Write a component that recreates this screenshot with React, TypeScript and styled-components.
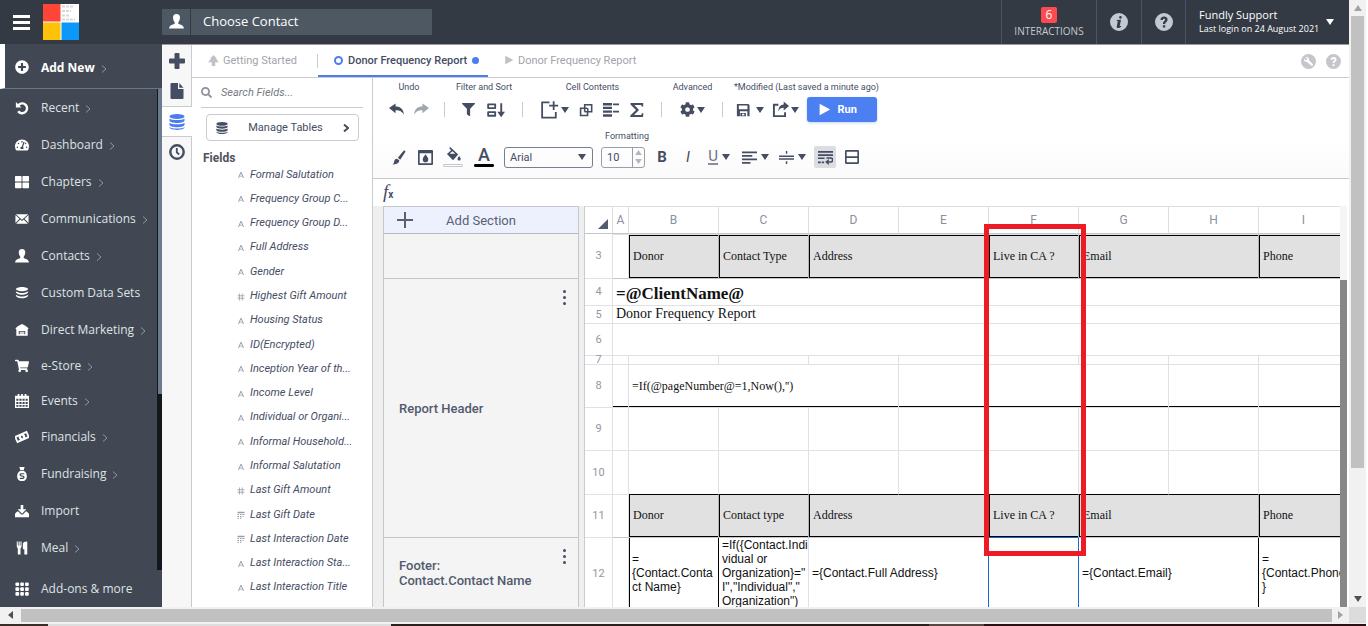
import React from "react";
import styled, { createGlobalStyle, css } from "styled-components";
import {
  FaPlusCircle, FaTachometerAlt, FaThLarge, FaShoppingCart,
  FaFilter, FaCog, FaSearch, FaWrench,
} from "react-icons/fa";

const sans = `"Open Sans", "Noto Sans", sans-serif`;
const ui = `Roboto, "Liberation Sans", sans-serif`;
const serif = `"Liberation Serif", serif`;
const ink = "#454d63";
const line = "#c9cbd0";

const GlobalStyle = createGlobalStyle`
  *, *::before, *::after { box-sizing: border-box; }
  body { margin: 0; background: #fff; overflow: hidden; }
  button, input, select { font: inherit; color: inherit; margin: 0; padding: 0; border: 0; background: none; }
  button { cursor: pointer; }
  svg { display: block; flex: none; }
`;

/* ---------- icons ---------- */
const glyphs: Record<string, React.ReactNode> = {
  undo: <path d="M1 1v6.500h6.500L5.300 5.300A4.200 4.200 0 1 1 4.800 10.800l-2.300 1.700A7 7 0 1 0 3.300 3.300Z" />,
  back: <path d="M0 6.500 7 1.500v3.300c5 0 8.300 2.700 9 8.700-2-3.500-4.500-4.800-9-4.800V12Z" />,
  forward: <path d="M16 6.500 9 1.500v3.300c-5 0-8.300 2.700-9 8.700 2-3.500 4.500-4.800 9-4.800V12Z" />,
  plus: <path d="M5.500 1a1 1 0 0 1 1-1h3a1 1 0 0 1 1 1v4.500H15a1 1 0 0 1 1 1v3a1 1 0 0 1-1 1h-4.500V15a1 1 0 0 1-1 1h-3a1 1 0 0 1-1-1v-4.500H1a1 1 0 0 1-1-1v-3a1 1 0 0 1 1-1h4.500Z" />,
  file: <path d="M2.500 0H9v6h5.500v9a1 1 0 0 1-1 1h-11a1 1 0 0 1-1-1V1a1 1 0 0 1 1-1ZM10.300 0l4.200 4.800h-4.200Z" />,
  data: <><ellipse cx="8" cy="2.500" rx="7.500" ry="2.500" /><path d="M.5 4.500c2 2 13 2 15 0v2.200c-1 3-14 3-15 0ZM.5 8.700c2 2 13 2 15 0v2.200c-1 3-14 3-15 0ZM.5 12.900c2 2 13 2 15 0v.7c-1 3.200-14 3.200-15 0Z" /></>,
  clock: <><circle cx="8" cy="8" r="6.700" fill="none" stroke="currentColor" strokeWidth="2.400" /><path d="M7.800 4v4.300l2.400 2.200" fill="none" stroke="currentColor" strokeWidth="1.800" /></>,
  brush: <path d="M14.500.5c1 .3 1 1.200.6 2L9.800 10.300 7.300 8.300 13 1.300Q13.800.4 14.500.5ZM6.500 9.200l2.500 2C8.500 14 6 15.500 1.500 15.500c1.800-1 1.500-2 2-3.800.5-1.600 1.600-2.500 3-2.500Z" />,
  mail: <><path d="M1 2.500h14l-7 6.300Z" /><path d="M.5 3.500v9l4.600-4.800ZM15.500 3.500v9l-4.600-4.800Z" /><path d="m1.300 13.500 4.700-5 2 1.800 2-1.800 4.700 5Z" /></>,
  person: <path d="M8 0c2.400 0 3.900 1.600 3.700 4.200-.1 2-1 3.600-1.700 4.600-.4.900 0 1.800 1 2.200 2.500.9 4.500 1.400 5 4.500H0c.5-3.100 2.500-3.600 5-4.500 1-.4 1.400-1.300 1-2.200-.7-1-1.600-2.600-1.700-4.600C4.100 1.600 5.600 0 8 0Z" />,
  layers: <><path d="M8 1c4 0 7 1.500 7 2.500S12 6 8 6 1 4.500 1 3.500 4 1 8 1Z" /><path d="M1 6c1.500 1.500 4.500 2 7 2s5.500-.5 7-2c.5 2.500-3 4-7 4S.5 8.500 1 6Z" /><path d="M1 10c1.500 1.500 4.500 2 7 2s5.500-.5 7-2c.5 2.500-3 4-7 4s-7.500-1.500-7-4Z" /></>,
  depot: <path fillRule="evenodd" d="M8 1c3 1.500 6 3 7.500 5.200L14.500 7.500V14.500H1.500V7.500L.5 6.200C2 4 5 2.500 8 1ZM4.300 9v3.800h1v-1h5.400v1h1V9Zm1 1h5.400v1H5.300Z" />,
  calendar: <path fillRule="evenodd" d="M3 0h2v2h2V0h2v2h2V0h2v2h3v14H0V2h3ZM1.500 5.500v2.300h2.400V5.500Zm3.500 0v2.300h2.500V5.500Zm3.600 0v2.300H11V5.500Zm3.500 0v2.300h2.400V5.500ZM1.500 9v2.300h2.400V9ZM5 9v2.300h2.500V9Zm3.600 0v2.300H11V9Zm3.500 0v2.300h2.400V9ZM1.500 12.500v2.100h2.400v-2.100Zm3.500 0v2.100h2.500v-2.100Zm3.600 0v2.100H11v-2.100Zm3.500 0v2.100h2.400v-2.100Z" />,
  cash: <g transform="rotate(-24 8 8)"><path fillRule="evenodd" d="M0 3.800h16v8.400H0Zm2 2.200v4h2.800a3.500 3.500 0 0 1 0-4Zm12 0h-2.800a3.500 3.500 0 0 1 0 4H14ZM8 6.500a1 1.500 0 1 0 0 3 1 1.500 0 1 0 0-3Z" /></g>,
  bag: <><path d="M5 0h6L10 3.500H6Z" /><path fillRule="evenodd" d="M6 4.300h4c2 1.200 3.500 3.200 3.500 6A5 5 0 0 1 8 16a5 5 0 0 1-5.500-5.700c0-2.800 1.500-4.800 3.500-6Zm4.600 4V7.100H6.700C5 7.100 4.500 9.800 6.300 10.500l2.800.7c.6.300.4 1.100-.2 1.100H5.500v1.300h3.600c2.200 0 2.500-3 .5-3.700l-2.500-.6c-.5-.2-.4-1 .1-1Z" /></>,
  tray: <><path d="M6.500 1h3v5H13L8 11 3 6h3.500Z" /><path d="M2.500 8.500h1.300L7 12h2l3.200-3.500h1.300L16 11v4H0v-4Z" /></>,
  cutlery: <><path d="M2 .5h1.200V5h.9V.5h1.300V5h.9V.5h1.200V6c0 1-.5 1.800-1.200 2.300V15.500H3.200V8.300C2.500 7.800 2 7 2 6Z" /><path d="M9 3c.5-1.500 1.800-2.500 5-2.500v15h-3.300V9.500H9Z" /></>,
  dots: <>{[2.500, 8, 13.500].map((y) => [2.500, 8, 13.500].map((x) => <rect key={`${x}-${y}`} x={x - 2} y={y - 2} width="4.200" height="4.200" rx="1.200" />))}</>,
  tree: <path d="M8 0 13 5l-1.500.5L16 10.500h-5.500V16h-5v-5.500H0l4.500-5L3 5Z" />,
  play: <path d="M2 1 15 8 2 15Z" />,
  letter: <path fillRule="evenodd" d="M7 2h2l5 12h-2l-1.200-3H5.200L4 14H2Zm1 2.300L5.800 9.500h4.400Z" />,
  hash: <path d="M5 1v14M10.500 1v14M1 5.500h14M1 10.500h14" fill="none" stroke="currentColor" strokeWidth="1.600" />,
  table: <path d="M1 1.500h14v3H1ZM1 6h3v2H1Zm5 0h3v2H6Zm5 0h4v2h-4ZM1 10h3v2H1Zm5 0h3v2H6ZM11 10h2v2h-2ZM1 13.500h3v2H1Zm5 0h3v2H6Z" />,
  sort: <><path d="M1 3h6.300v3.300H1ZM1 9.800h6.300v3.300H1Z" fill="none" stroke="currentColor" strokeWidth="1.600" strokeLinejoin="round" /><path d="M11.800 2h1.700v7.500H16L12.600 14.500 9.200 9.500h2.600Z" /></>,
  insert: <><path d="M8 2H1.800v12.800h11.500V10" fill="none" stroke="currentColor" strokeWidth="1.500" /><path d="M11.500 1v7.500M7.700 4.700h7.600" fill="none" stroke="currentColor" strokeWidth="1.500" /></>,
  merge: <path d="M6.500 10V2h8v8h-4.500V6M9.500 6H1.800v8.200h8V10H6.500" fill="none" stroke="currentColor" strokeWidth="1.800" />,
  outline: <><path d="M0 1h9v2.500H0ZM0 4.800h9V7H0ZM0 8.400h9v2.300H0ZM0 12.200h9v2.500H0Z" /><path d="M10 1.500h6v1.700h-6ZM10 8.700h6v1.700h-6Z" /></>,
  sigma: <path d="M1.500 1h12.700v3.500h-1.600l-.3-1.600H5.400L10 8l-5 5.100h7.400l.4-1.800h1.600L14 15H1.300v-1.400L7 8 1.500 2.400Z" />,
  save: <path fillRule="evenodd" d="M1 1h13.200L15.500 2.500V15H1Zm2.200 1.800v4.400h9.900V2.800ZM4.500 9.500V15H3.200 5v-3.600h6.300V15h1.700V9.500ZM7 12.300h2.500v1.900H7Z" />,
  share: <><path d="M6 3.500H1.800v10.700h10.500V10.500" fill="none" stroke="currentColor" strokeWidth="1.800" /><path d="M11 .5 16 4.700 11 9V6.300C8.500 6.300 7 7.300 6 9.800c0-4 1.800-6.200 5-6.500Z" /></>,
  drop: <path fillRule="evenodd" d="M1 0h14a1 1 0 0 1 1 1v14a1 1 0 0 1-1 1H1a1 1 0 0 1-1-1V1a1 1 0 0 1 1-1Zm.8 3.500v10.700h12.400V3.500ZM8 4.500c2 2.800 3 4.200 3 5.500a3 3 0 0 1-6 0c0-1.300 1-2.700 3-5.500Z" />,
  bucket: <><path fillRule="evenodd" d="M4.500 0 13 8l-5.500 6L1 7.500 5.500 3.400 3.500 1.200ZM6.700 4.600 3.800 7.300h6.200Z" /><path d="M14 9.500c1.200 1.700 1.700 2.400 1.700 3.300a1.700 1.700 0 0 1-3.400 0c0-.9.500-1.600 1.700-3.300Z" /></>,
  align: <path d="M0 1.500h16v1.900H0ZM0 5.200h11v1.900H0ZM0 9h16v1.900H0ZM0 12.700h9v1.900H0Z" />,
  middle: <path d="M7.300 1h1.500v3H7.300ZM7.300 12h1.500v3H7.300ZM0 5.800h16v1.700H0ZM0 8.700h16v1.700H0Z" />,
  wrap: <><path d="M0 1h16v2H0ZM0 4.500h16v2H0ZM0 8h7v1.600H0ZM0 12.300h3v1.800H0ZM4 12.300h2.500v1.800H4Z" /><path d="M9 8.500h4.500a1.600 1.600 0 0 1 0 4.300H11" fill="none" stroke="currentColor" strokeWidth="1.700" /><path d="M11.500 9.500V16l-4-3.200Z" /></>,
  split: <path fillRule="evenodd" d="M0 1.500A1.500 1.500 0 0 1 1.500 0h13A1.500 1.500 0 0 1 16 1.500v13a1.500 1.500 0 0 1-1.500 1.500h-13A1.500 1.500 0 0 1 0 14.500ZM1.900 1.900V7h12.200V1.900Zm0 7.100v5.100h12.200V9Z" />,
  info: <path fillRule="evenodd" d="M8 0a8 8 0 1 1 0 16A8 8 0 0 1 8 0Zm1.300 2.600a1.200 1.200 0 1 0 0 2.400 1.200 1.200 0 0 0 0-2.400ZM6 6.200v1h1L6 12c-.2 1.500 1.600 2 4 .2l-.3-.8c-.8.5-1.200.4-1-.3L9.800 6Z" />,
  help: <path fillRule="evenodd" d="M8 0a8 8 0 1 1 0 16A8 8 0 0 1 8 0ZM4.800 6.200h2.100c.1-1.600 2.200-1.500 2.100-.2-.1 1.100-2 1.400-2 3.700h2c0-1.500 2.200-1.900 2.200-3.900 0-3.500-6.300-3.600-6.400.4ZM7 10.800v2.100h2.100v-2.100Z" />,
};

const Glyph = ({ name, size = 14 }: { name: string; size?: number }) => (
  <svg width={size} height={size} viewBox="0 0 16 16" fill="currentColor" aria-hidden="true">{glyphs[name]}</svg>
);
const Caret = ({ up }: { up?: boolean }) => (
  <svg width="8" height="6" viewBox="0 0 8 6" fill="currentColor" aria-hidden="true"><path d={up ? "M4 0 8 6H0Z" : "M0 0h8L4 6Z"} /></svg>
);
const Chevron = ({ bold }: { bold?: boolean }) => (
  <svg width="6" height="8" viewBox="0 0 6 8" fill="none" stroke="currentColor" strokeWidth={bold ? 2 : 1} aria-hidden="true"><path d="m1 .5 4 3.500-4 3.500" /></svg>
);

/* ---------- page frame ---------- */
const Frame = styled.div`
  display: grid;
  grid-template-columns: minmax(0, 1fr) 17px;
  grid-template-rows: minmax(0, 1fr) 16px 3px;
  height: 100vh;
  padding-right: 2px;
  font-family: ${ui};
  font-size: 11px;
  color: ${ink};
`;
const Page = styled.div`display: flex; flex-direction: column; min-width: 0; overflow: hidden;`;
const VScroll = styled.div`
  display: grid;
  grid-template-rows: 16px 452fr 122fr 17px;
  justify-items: center;
  background: #f1f1f1;
  color: #505050;
  > svg { align-self: center; }
  > svg:first-child { color: #a3a3a3; }
`;
const HScroll = styled.div`
  display: grid;
  grid-template-columns: 21px minmax(0, 1fr) 17px;
  align-items: center;
  justify-items: center;
  background: #f1f1f1;
`;
const Thumb = styled.div<{ $across?: boolean }>`
  background: #c1c1c1;
  ${(p) => (p.$across ? "height: 13px; width: 100%;" : "width: 13px;")}
`;
const Corner = styled.div`background: #dcdcdc;`;
const Strip = styled.div`
  grid-column: 1 / -1;
  border-top: 1px solid #f1f1f1;
  background: linear-gradient(90deg, #3a2d27 0 3.500%, #dedede 3.500% 28.600%, #2d211d 28.600% 68%, #594743 68% 72%, #2c1013 72%);
`;

/* ---------- header ---------- */
const Header = styled.header`
  display: flex;
  flex: none;
  height: 44px;
  background: #343a44;
  color: #fff;
  font-family: ${sans};
`;
const Brand = styled.div`display: flex; align-items: center; gap: 13px; width: 162px; padding-left: 13px;`;
const MenuButton = styled.button`
  display: grid;
  gap: 3px;
  width: 17px;
  span { height: 3px; background: #fff; }
`;
const ContactSearch = styled.label`
  display: flex;
  align-self: center;
  width: 270px;
  height: 26px;
  background: #4d5863;
  > span { display: grid; place-items: center; width: 29px; padding-bottom: 2px; border-right: 1px solid #343a44; }
`;
const ContactInput = styled.input`
  flex: 1;
  min-width: 0;
  padding: 0 0 2px 12px;
  font-size: 13px;
  outline: 0;
  &::placeholder { color: #fff; opacity: 1; }
`;
const HeaderRight = styled.div`display: flex; margin-left: auto;`;
const HeaderCell = styled.button<{ $w: number }>`
  display: flex;
  flex-direction: column;
  align-items: center;
  justify-content: center;
  width: ${(p) => p.$w}px;
  border-left: 1px solid #4c5562;
  font-size: 10px;
  line-height: 14px;
  color: #c3c9d1;
`;
const Badge = styled.span`
  width: 16px;
  margin-bottom: 1px;
  border-radius: 2px;
  background: #fc4a4e;
  color: #fff;
  font-size: 12px;
  line-height: 16px;
`;
const Account = styled(HeaderCell)`
  flex-direction: row;
  justify-content: flex-start;
  gap: 7px;
  padding-left: 13px;
  color: #fff;
  text-align: left;
  strong { display: block; font-size: 11px; font-weight: 400; }
  span { font-size: 9px; white-space: nowrap; }
`;

/* ---------- main navigation ---------- */
const Body = styled.div`display: flex; flex: 1; min-height: 0;`;
const Sidebar = styled.nav`
  display: flex;
  flex-direction: column;
  flex: none;
  width: 162px;
  background: #414853;
  font-family: ${sans};
  font-size: 12px;
`;
const NavLink = styled.a<{ $kind?: "add" | "short" }>`
  display: flex;
  flex: none;
  align-items: center;
  gap: 12px;
  height: ${(p) => (p.$kind === "add" ? 45 : p.$kind === "short" ? 35 : 37)}px;
  padding-left: 15px;
  color: #dfe2e6;
  white-space: nowrap;
  text-decoration: none;
  > svg { color: #fff; }
  > span { display: flex; align-items: center; gap: 6px; }
  > span > svg { color: #9197a0; margin-top: 3px; }
  ${(p) => p.$kind === "add" && css`
    padding: 2px 0 0 10px;
    border-left: 5px solid #fff;
    border-bottom: 1px solid #66768c;
    color: #fff;
    font-weight: 700;
  `}
`;
const NavScroll = styled.div`display: flex; flex: 1; min-height: 0; overflow: hidden;`;
const NavList = styled.div`flex: 1; min-width: 0;`;
const NavBar = styled.div`
  display: grid;
  grid-template-rows: 305fr 176fr;
  width: 5px;
  border-left: 1px solid #14171c;
  background: #14171c;
  div { background: #6c7a8e; }
`;

/* ---------- report writer ---------- */
const Writer = styled.main`display: flex; flex: 1; min-width: 0; border-top: 1px solid #9a9a9a;`;
const Rail = styled.div`width: 30px; flex: none; padding-top: 1px; background: #f7f7f7; border-right: 1px solid ${line};`;
const RailButton = styled.button<{ $on?: boolean }>`
  display: grid;
  place-items: center;
  width: 29px;
  height: 30px;
  ${(p) => p.$on && css`
    width: 30px;
    height: 31px;
    border-top: 1px solid ${line};
    border-bottom: 1px solid ${line};
    background: #fff;
    color: #4c7df0;
  `}
`;
const Workspace = styled.div`display: flex; flex-direction: column; flex: 1; min-width: 0;`;
const Tabs = styled.div`display: flex; flex: none; height: 33px; padding-right: 8px; border-bottom: 1px solid ${line};`;
const Tab = styled.button<{ $w: number; $on?: boolean }>`
  display: flex;
  align-items: center;
  gap: ${(p) => (p.$on ? 5 : 4)}px;
  width: ${(p) => p.$w}px;
  height: 32px;
  padding-left: 16px;
  border-bottom: 2px solid ${(p) => (p.$on ? "#4c7df0" : "transparent")};
  color: ${(p) => (p.$on ? ink : "#a2a4ab")};
  font-weight: ${(p) => (p.$on ? 500 : 400)};
  white-space: nowrap;
  > svg { color: #c0c2c7; }
`;
const TabRule = styled.span`width: 1px; height: 14px; margin: 9px 0; background: ${line};`;
const Ring = styled.i`width: 9px; height: 9px; border: 2px solid #4c7df0; border-radius: 50%;`;
const Dot = styled.i`width: 7px; height: 7px; border-radius: 50%; background: #4c7df0;`;
const TabTools = styled.div`display: flex; align-items: center; gap: 10px; margin-left: auto; color: #c4c6cc;`;
const RoundButton = styled.button`
  display: grid;
  place-items: center;
  width: 15px;
  height: 15px;
  border-radius: 50%;
  background: #c4c6cc;
  color: #fff;
  svg { transform: scaleX(-1); }
`;
const PlainButton = styled.button`color: inherit;`;
const Columns = styled.div`display: flex; flex: 1; min-height: 0;`;

/* ---------- fields panel ---------- */
const Fields = styled.aside`
  display: flex;
  flex-direction: column;
  flex: none;
  width: 181px;
  padding-bottom: 8px;
  border-right: 1px solid ${line};
`;
const FieldSearch = styled.label`
  display: flex;
  align-items: center;
  gap: 9px;
  height: 30px;
  margin: 0 9px;
  border-bottom: 1px solid ${line};
  color: #8d919b;
  input { width: 120px; font-style: italic; outline: 0; }
  input::placeholder { color: #777a82; opacity: 1; }
`;
const ManageButton = styled.button`
  display: flex;
  align-items: center;
  justify-content: space-between;
  height: 27px;
  margin: 6px 13px 0 14px;
  padding: 0 9px;
  border: 1px solid ${line};
  border-radius: 4px;
`;
const FieldsTitle = styled.h2`
  margin: 9px 0 0 11px;
  font-size: 12px;
  font-weight: 700;
  line-height: 16px;
  color: #50535c;
`;
const FieldList = styled.ul`
  display: flex;
  flex: 1;
  flex-direction: column;
  min-height: 0;
  margin: -4px 0 0;
  padding: 0 20px 0 45px;
  list-style: none;
  font-style: italic;
`;
const FieldItem = styled.li`
  display: flex;
  flex: 1;
  align-items: center;
  gap: 5px;
  white-space: nowrap;
  > svg { color: #9a9ea8; margin-top: 2px; }
`;

/* ---------- toolbar ---------- */
const Editor = styled.section`display: flex; flex-direction: column; flex: 1; min-width: 0;`;
const Toolbar = styled.div`
  flex: none;
  height: 101px;
  border-bottom: 1px solid ${line};
  background: linear-gradient(#fff 60%, #fafafa);
`;
const Groups = styled.div`display: flex; height: 51px;`;
const Group = styled.div<{ $w: number }>`
  display: flex;
  flex-direction: column;
  align-items: center;
  gap: 8px;
  width: ${(p) => p.$w}px;
  padding-top: 2px;
`;
const GroupLabel = styled.div`font-size: 9px; line-height: 14px; white-space: nowrap;`;
const GroupTools = styled.div<{ $gap: number; $last?: boolean }>`
  display: flex;
  align-items: center;
  justify-content: center;
  gap: ${(p) => p.$gap}px;
  width: 100%;
  height: 15px;
  border-right: 1px solid ${(p) => (p.$last ? "transparent" : line)};
`;
const ToolButton = styled.button<{ $gap?: number; $dim?: boolean }>`
  display: flex;
  align-items: center;
  gap: ${(p) => p.$gap ?? 2}px;
  ${(p) => p.$dim && "opacity: .5;"}
`;
const RunButton = styled.button`
  display: flex;
  align-items: center;
  gap: 7px;
  width: 70px;
  height: 25px;
  padding: 0 0 1px 11px;
  border-radius: 3px;
  background: #4c7ff2;
  color: #fff;
  font-weight: 700;
  box-shadow: 0 1px 3px #c7d3f0;
`;
const Format = styled.div`display: inline-flex; flex-direction: column; align-items: center; padding-left: 11px;`;
const FormatRow = styled.div`display: flex; align-items: center; height: 28px; padding-right: 7px;`;
const FormatButton = styled.button<{ $w: number; $on?: boolean }>`
  display: flex;
  align-items: center;
  justify-content: center;
  gap: 4px;
  width: ${(p) => p.$w}px;
  height: 22px;
  border-radius: 2px;
  ${(p) => p.$on && "background: #dcdde1; margin: 0 5px 0 3px;"}
`;
const Swatch = styled.span<{ $ink: string; $edge: string }>`
  display: flex;
  flex-direction: column;
  align-items: center;
  justify-content: space-between;
  width: 20px;
  height: 20px;
  font-size: 18px;
  font-weight: 500;
  line-height: 16px;
  &::after { content: ""; width: 100%; height: 3px; border: 1px solid ${(p) => p.$edge}; border-radius: 1px; background: ${(p) => p.$ink}; }
`;
const Mark = styled.span<{ $kind: "b" | "i" | "u" }>`
  font-size: 15px;
  line-height: 17px;
  ${(p) => p.$kind === "b" && "font-weight: 700;"}
  ${(p) => p.$kind === "i" && "font-style: italic;"}
  ${(p) => p.$kind === "u" && "border-bottom: 2px solid #8a8f9c; color: #6d7484; line-height: 14px;"}
`;
const FontPicker = styled.label`
  display: grid;
  grid-template-columns: 1fr 14px;
  align-items: center;
  width: 89px;
  height: 21px;
  margin: 0 8px 0 4px;
  border: 1px solid #777e90;
  border-radius: 3px;
  select { grid-area: 1 / 1 / 2 / 3; height: 19px; padding-left: 5px; appearance: none; outline: 0; }
  svg { grid-area: 1 / 2; }
`;
const SizePicker = styled.div`
  display: flex;
  width: 44px;
  height: 21px;
  margin-right: 4px;
  border: 1px solid #9a9fac;
  border-radius: 3px;
  input { width: 30px; padding-left: 5px; outline: 0; }
`;
const Spinner = styled.div`
  display: grid;
  flex: 1;
  place-items: center;
  border-left: 1px solid #9a9fac;
  color: #b3b6bf;
  svg { width: 7px; height: 5px; }
`;
const FormulaBar = styled.label`
  display: flex;
  flex: none;
  align-items: center;
  height: 27px;
  padding: 0 0 2px 10px;
  font: italic 400 19px/20px ${serif};
  sub { font: 700 10px/12px ${ui}; align-self: center; padding-top: 6px; }
  input { flex: 1; outline: 0; }
`;

/* ---------- sections and sheet ---------- */
const Canvas = styled.div`display: flex; flex: 1; min-height: 0; margin-right: 2px; padding-left: 10px; background: #efefef; overflow: hidden;`;
const Sections = styled.div`
  display: flex;
  flex-direction: column;
  flex: none;
  width: 196px;
  margin-right: 5px;
  border: 1px solid #c3c6cd;
  border-bottom: 0;
  background: #f4f4f4;
`;
const AddSection = styled.button`
  display: grid;
  grid-template-columns: 42px 1fr;
  align-items: center;
  justify-items: center;
  flex: none;
  height: 27px;
  padding-right: 42px;
  border-bottom: 1px solid #b4b8c2;
  background: #edf1fd;
  font-size: 13px;
  color: #596074;
`;
const Section = styled.div<{ $h: number }>`
  display: flex;
  flex: none;
  align-items: center;
  justify-content: space-between;
  height: ${(p) => p.$h}px;
  padding-left: 15px;
  border-bottom: 1px solid #c3c6cd;
  font-size: 13px;
  font-weight: 500;
  line-height: 15px;
  color: #535a6e;
`;
const More = styled.button`
  display: grid;
  align-self: flex-start;
  gap: 3px;
  padding: 11px 12px 0;
  i { width: 3px; height: 3px; border-radius: 50%; background: ${ink}; }
`;
const Sheet = styled.div`position: relative; display: flex; flex: 1; min-width: 0; background: #fff;`;
const SheetClip = styled.div`flex: 1; min-width: 0; overflow: hidden; border-left: 1px solid ${line};`;
const Table = styled.table`
  table-layout: fixed;
  width: 764px;
  border-collapse: separate;
  border-spacing: 0;
  font-size: 12px;
`;
const Head = styled.th`
  height: 28px;
  padding: 0;
  border: solid #dcdee2;
  border-width: 1px 1px 1px 0;
  border-bottom-color: #c3c6cd;
  font-size: 12px;
  font-weight: 400;
  color: #8b909c;
  svg { margin: 7px 0 0 13px; }
`;
const RowHead = styled.th`
  padding: 0;
  border: solid #e0e1e5;
  border-width: 0 1px 1px 0;
  font-size: 11px;
  font-weight: 400;
  line-height: 8px;
  color: #9297a3;
`;
type CellStyle = { $face?: "title" | "report" | "label" | "arial"; $shadow?: string; $right?: string; $bottom?: string; $top?: string; $grey?: boolean };
const Cell = styled.td<CellStyle>`
  padding: ${(p) => (p.$grey ? "0 0 2px 4px" : p.$face ? "0 0 1px 3px" : "0")};
  border-right: 1px solid ${(p) => p.$right ?? "#e0e1e5"};
  border-bottom: 1px solid ${(p) => p.$bottom ?? "#e0e1e5"};
  ${(p) => p.$top && `border-top: 1px solid ${p.$top};`}
  background: ${(p) => (p.$grey ? "#e1e1e1" : "#fff")};
  background-clip: padding-box;
  box-shadow: ${(p) => p.$shadow ?? "none"};
  color: #111;
  overflow: hidden;
  ${(p) => p.$face === "label" && `font: 12px/14px ${serif};`}
  ${(p) => p.$face === "report" && `font: 14px/16px ${serif};`}
  ${(p) => p.$face === "title" && `font: 700 17px/20px ${serif}; vertical-align: bottom;`}
  ${(p) => p.$face === "arial" && `font: 12px/14px "Liberation Sans", sans-serif;`}
`;
const Row = styled.tr<{ $h: number }>`height: ${(p) => p.$h}px;`;
const SheetScroll = styled.div`
  display: grid;
  grid-template-rows: 74px 1fr;
  flex: none;
  width: 7px;
  background: #f5f5f5;
  div { grid-row: 2; background: #878787; }
`;
const Highlight = styled.div`
  position: absolute;
  top: 18px;
  left: 400px;
  width: 102px;
  height: 332px;
  border: 5px solid #ed1c24;
`;

const navItems: { text: string; icon: React.ReactNode; more?: boolean; short?: boolean }[] = [
  { text: "Recent", icon: <Glyph name="undo" />, more: true },
  { text: "Dashboard", icon: <FaTachometerAlt size={14} />, more: true },
  { text: "Chapters", icon: <FaThLarge size={14} />, more: true },
  { text: "Communications", icon: <Glyph name="mail" />, more: true },
  { text: "Contacts", icon: <Glyph name="person" />, more: true },
  { text: "Custom Data Sets", icon: <Glyph name="layers" /> },
  { text: "Direct Marketing", icon: <Glyph name="depot" />, more: true },
  { text: "e-Store", icon: <FaShoppingCart size={14} />, more: true, short: true },
  { text: "Events", icon: <Glyph name="calendar" />, more: true, short: true },
  { text: "Financials", icon: <Glyph name="cash" />, more: true },
  { text: "Fundraising", icon: <Glyph name="bag" />, more: true },
  { text: "Import", icon: <Glyph name="tray" /> },
  { text: "Meal", icon: <Glyph name="cutlery" />, more: true },
];

const fieldItems: [string, string][] = [
  ["letter", "Formal Salutation"], ["letter", "Frequency Group C..."], ["letter", "Frequency Group D..."],
  ["letter", "Full Address"], ["letter", "Gender"], ["hash", "Highest Gift Amount"], ["letter", "Housing Status"],
  ["letter", "ID(Encrypted)"], ["letter", "Inception Year of th..."], ["letter", "Income Level"],
  ["letter", "Individual or Organi..."], ["letter", "Informal Household..."], ["letter", "Informal Salutation"],
  ["hash", "Last Gift Amount"], ["table", "Last Gift Date"], ["table", "Last Interaction Date"],
  ["letter", "Last Interaction Sta..."], ["letter", "Last Interaction Title"],
];

const HeadingCells = ({ type, top, lower }: { type: string; top?: string; lower?: boolean }) => {
  const shadow = lower ? "inset 1px 0 #000, inset 0 -1px #000" : "inset 1px 1px #000, inset 0 -1px #000";
  const shared: CellStyle = { $face: "label", $grey: true, $shadow: shadow, $top: top, $right: "#b5b5b5", $bottom: "#c3c6cd" };
  return (
    <>
      <Cell $top={top} $bottom="#c3c6cd" />
      <Cell {...shared}>Donor</Cell>
      <Cell {...shared}>{type}</Cell>
      <Cell {...shared} colSpan={2}>Address</Cell>
      <Cell {...shared} $bottom={lower ? "#1a66d6" : "#c3c6cd"}>Live in CA ?</Cell>
      <Cell {...shared} colSpan={2}>Email</Cell>
      <Cell {...shared}>Phone</Cell>
    </>
  );
};
const emptyCells = (bottom?: string) =>
  Array.from({ length: 9 }, (_, i) => <Cell key={i} $bottom={i > 0 ? bottom : undefined} />);

const ReportSheet = () => (
  <Table>
    <colgroup>
      <col style={{ width: 28 }} /><col style={{ width: 16 }} />
      {"BCDEFGHI".split("").map((c) => <col key={c} style={{ width: 90 }} />)}
    </colgroup>
    <thead>
      <tr>
        <Head aria-label="Select all"><svg width="10" height="10" fill="#545c70"><path d="M10 0v10H0Z" /></svg></Head>
        {"ABCDEFGHI".split("").map((c) => <Head key={c} scope="col">{c}</Head>)}
      </tr>
    </thead>
    <tbody>
      <Row $h={45}><RowHead>3</RowHead><HeadingCells type="Contact Type" top="#e0e1e5" /></Row>
      <Row $h={27}><RowHead>4</RowHead><Cell $face="title" colSpan={9}>=@ClientName@</Cell></Row>
      <Row $h={18}><RowHead>5</RowHead><Cell $face="report" colSpan={9}>Donor Frequency Report</Cell></Row>
      <Row $h={32}><RowHead>6</RowHead><Cell colSpan={9} /></Row>
      <Row $h={9}><RowHead>7</RowHead>{emptyCells()}</Row>
      <Row $h={43}>
        <RowHead>8</RowHead>
        <Cell $shadow="inset 0 -1px #000" />
        <Cell $face="label" $shadow="inset 0 -1px #000" colSpan={3}>=If(@pageNumber@=1,Now(),'')</Cell>
        <Cell $shadow="inset 0 -1px #000" />
        <Cell $shadow="inset 0 -1px #000" colSpan={2} />
        <Cell $shadow="inset 0 -1px #000" />
        <Cell $shadow="inset 0 -1px #000" />
      </Row>
      <Row $h={43}><RowHead>9</RowHead>{emptyCells()}</Row>
      <Row $h={44}><RowHead>10</RowHead>{emptyCells("#000")}</Row>
      <Row $h={43}><RowHead>11</RowHead><HeadingCells type="Contact type" lower /></Row>
      <Row $h={71}>
        <RowHead>12</RowHead>
        <Cell />
        <Cell $face="arial" $shadow="inset 1px 0 #000" $right="#000">=<br />{"{Contact.Conta"}<br />ct Name{"}"}</Cell>
        <Cell $face="arial">{"=If({Contact.Indi"}<br />vidual or<br />{"Organization}=\""}<br />{"I\",\"Individual\",\""}<br />{"Organization\")"}</Cell>
        <Cell $face="arial" $right="#1a66d6" colSpan={2}>{"={Contact.Full Address}"}</Cell>
        <Cell $right="#1a66d6" />
        <Cell $face="arial" $right="#000" colSpan={2}>{"={Contact.Email}"}</Cell>
        <Cell $face="arial">=<br />{"{Contact.Phone"}<br />{"}"}</Cell>
      </Row>
    </tbody>
  </Table>
);

const MoreButton = () => <More aria-label="Section options"><i /><i /><i /></More>;

export default function App() {
  return (
    <Frame>
      <GlobalStyle />
      <Page>
        <Header>
          <Brand>
            <MenuButton aria-label="Menu"><span /><span /><span /></MenuButton>
            <svg width="36" height="36" viewBox="0 0 36 36" role="img" aria-label="Arts Center">
              <path fill="#fff" d="M0 0h36v36H0Z" />
              <path fill="#ff4438" d="M0 0h17.500v17.500H0Z" />
              <path fill="#ffc20a" d="M0 18.500h17.500V36H0Z" />
              <path fill="#0c97fb" d="M18.500 18.500H36V36H18.500Z" />
              <path stroke="#d8d8d8" strokeWidth="2" strokeDasharray="3 1" d="M19 2.500h12M19 7h9M19 11.500h8M19 15.500h13" />
            </svg>
          </Brand>
          <ContactSearch>
            <span><Glyph name="person" size={15} /></span>
            <ContactInput aria-label="Choose Contact" placeholder="Choose Contact" />
          </ContactSearch>
          <HeaderRight>
            <HeaderCell $w={95}><Badge>6</Badge><span>INTERACTIONS</span></HeaderCell>
            <HeaderCell $w={45} aria-label="Information"><Glyph name="info" size={18} /></HeaderCell>
            <HeaderCell $w={44} aria-label="Help"><Glyph name="help" size={18} /></HeaderCell>
            <Account $w={164}><span><strong>Fundly Support</strong>Last login on 24 August 2021</span><Caret /></Account>
          </HeaderRight>
        </Header>
        <Body>
          <Sidebar>
            <NavLink href="#add" $kind="add"><FaPlusCircle size={14} /><span>Add New <Chevron /></span></NavLink>
            <NavScroll>
              <NavList>
                {navItems.map((n) => (
                  <NavLink key={n.text} href="#nav" $kind={n.short ? "short" : undefined}>
                    {n.icon}<span>{n.text}{n.more && <Chevron />}</span>
                  </NavLink>
                ))}
              </NavList>
              <NavBar><div /></NavBar>
            </NavScroll>
            <NavLink href="#more"><Glyph name="dots" /><span>Add-ons &amp; more</span></NavLink>
          </Sidebar>
          <Writer>
            <Rail>
              <RailButton aria-label="New"><Glyph name="plus" size={16} /></RailButton>
              <RailButton aria-label="Report"><Glyph name="file" size={16} /></RailButton>
              <RailButton $on aria-label="Data"><Glyph name="data" size={16} /></RailButton>
              <RailButton aria-label="History"><Glyph name="clock" size={16} /></RailButton>
            </Rail>
            <Workspace>
              <Tabs>
                <Tab $w={125}><Glyph name="tree" size={11} />Getting Started</Tab>
                <TabRule />
                <Tab $w={170} $on><Ring />Donor Frequency Report <Dot /></Tab>
                <Tab $w={170}><Glyph name="play" size={10} />Donor Frequency Report</Tab>
                <TabTools>
                  <RoundButton aria-label="Settings"><FaWrench size={9} /></RoundButton>
                  <PlainButton aria-label="Help"><Glyph name="help" size={15} /></PlainButton>
                </TabTools>
              </Tabs>
              <Columns>
                <Fields>
                  <FieldSearch><FaSearch size={11} /><input aria-label="Search Fields" placeholder="Search Fields..." /></FieldSearch>
                  <ManageButton><Glyph name="data" size={12} />Manage Tables<Chevron bold /></ManageButton>
                  <FieldsTitle>Fields</FieldsTitle>
                  <FieldList>
                    {fieldItems.map(([icon, text]) => <FieldItem key={text}><Glyph name={icon} size={8} />{text}</FieldItem>)}
                  </FieldList>
                </Fields>
                <Editor>
                  <Toolbar>
                    <Groups>
                      <Group $w={72}>
                        <GroupLabel>Undo</GroupLabel>
                        <GroupTools $gap={10}>
                          <ToolButton aria-label="Undo"><Glyph name="back" size={15} /></ToolButton>
                          <ToolButton aria-label="Redo" $dim><Glyph name="forward" size={15} /></ToolButton>
                        </GroupTools>
                      </Group>
                      <Group $w={78}>
                        <GroupLabel>Filter and Sort</GroupLabel>
                        <GroupTools $gap={12}>
                          <ToolButton aria-label="Filter"><FaFilter size={13} /></ToolButton>
                          <ToolButton aria-label="Sort"><Glyph name="sort" size={18} /></ToolButton>
                        </GroupTools>
                      </Group>
                      <Group $w={139}>
                        <GroupLabel>Cell Contents</GroupLabel>
                        <GroupTools $gap={10}>
                          <ToolButton aria-label="Insert"><Glyph name="insert" size={19} /><Caret /></ToolButton>
                          <ToolButton aria-label="Link cells"><Glyph name="merge" size={14} /></ToolButton>
                          <ToolButton aria-label="Outline"><Glyph name="outline" size={16} /></ToolButton>
                          <ToolButton aria-label="Sum"><Glyph name="sigma" size={16} /></ToolButton>
                        </GroupTools>
                      </Group>
                      <Group $w={61}>
                        <GroupLabel>Advanced</GroupLabel>
                        <GroupTools $gap={0}>
                          <ToolButton aria-label="Advanced"><FaCog size={15} /><Caret /></ToolButton>
                        </GroupTools>
                      </Group>
                      <Group $w={167}>
                        <GroupLabel>*Modified (Last saved a minute ago)</GroupLabel>
                        <GroupTools $gap={8} $last>
                          <ToolButton aria-label="Save" $gap={6}><Glyph name="save" size={14} /><Caret /></ToolButton>
                          <ToolButton aria-label="Export"><Glyph name="share" size={17} /><Caret /></ToolButton>
                          <RunButton><Glyph name="play" size={13} />Run</RunButton>
                        </GroupTools>
                      </Group>
                    </Groups>
                    <Format>
                      <GroupLabel>Formatting</GroupLabel>
                      <FormatRow>
                        <FormatButton $w={28} aria-label="Format painter"><Glyph name="brush" size={15} /></FormatButton>
                        <FormatButton $w={26} aria-label="Conditional format"><Glyph name="drop" size={15} /></FormatButton>
                        <FormatButton $w={30} aria-label="Fill colour"><Swatch $ink="#fff" $edge="#c3c6cd"><Glyph name="bucket" size={15} /></Swatch></FormatButton>
                        <FormatButton $w={32} aria-label="Text colour"><Swatch $ink="#000" $edge="#000">A</Swatch></FormatButton>
                        <FontPicker><select aria-label="Font"><option>Arial</option></select><Caret /></FontPicker>
                        <SizePicker>
                          <input aria-label="Font size" defaultValue="10" />
                          <Spinner><Caret up /><Caret /></Spinner>
                        </SizePicker>
                        <FormatButton $w={26} aria-label="Bold"><Mark $kind="b">B</Mark></FormatButton>
                        <FormatButton $w={26} aria-label="Italic"><Mark $kind="i">I</Mark></FormatButton>
                        <FormatButton $w={36} aria-label="Underline"><Mark $kind="u">U</Mark><Caret /></FormatButton>
                        <FormatButton $w={36} aria-label="Align"><Glyph name="align" size={15} /><Caret /></FormatButton>
                        <FormatButton $w={38} aria-label="Vertical align"><Glyph name="middle" size={15} /><Caret /></FormatButton>
                        <FormatButton $w={22} $on aria-label="Wrap text"><Glyph name="wrap" size={15} /></FormatButton>
                        <FormatButton $w={22} aria-label="Merge cells"><Glyph name="split" size={14} /></FormatButton>
                      </FormatRow>
                    </Format>
                  </Toolbar>
                  <FormulaBar>f<sub>x</sub><input aria-label="Formula" /></FormulaBar>
                  <Canvas>
                    <Sections>
                      <AddSection>
                        <svg width="16" height="16" stroke="currentColor" strokeWidth="2"><path d="M8 0v16M0 8h16" /></svg>
                        Add Section
                      </AddSection>
                      <Section $h={45} />
                      <Section $h={259}>Report Header<MoreButton /></Section>
                      <Section $h={71}><span>Footer:<br />Contact.Contact Name</span><MoreButton /></Section>
                    </Sections>
                    <Sheet>
                      <SheetClip><ReportSheet /></SheetClip>
                      <SheetScroll><div /></SheetScroll>
                      <Highlight />
                    </Sheet>
                  </Canvas>
                </Editor>
              </Columns>
            </Workspace>
          </Writer>
        </Body>
      </Page>
      <VScroll><Caret up /><Thumb /><span /><Caret /></VScroll>
      <HScroll>
        <svg width="5" height="8" fill="#505050"><path d="M5 0v8L0 4Z" /></svg>
        <Thumb $across />
        <svg width="5" height="8" fill="#a3a3a3"><path d="M0 0v8l5-4Z" /></svg>
      </HScroll>
      <Corner />
      <Strip />
    </Frame>
  );
}
